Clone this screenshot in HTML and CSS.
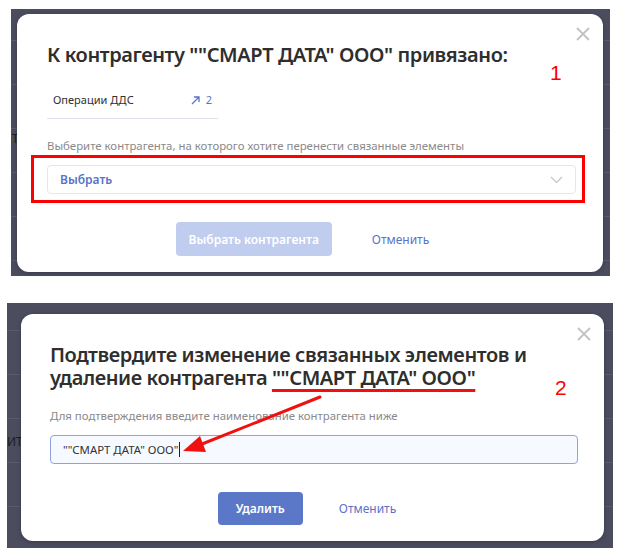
FILE: index.html
```html
<!DOCTYPE html>
<html lang="ru">

<head>
  <meta charset="UTF-8" />
  <meta name="viewport" content="width=device-width, initial-scale=1.0" />
  <title>Удаление контрагента</title>
  <link rel="stylesheet" href="styles.css">
</head>

<body>

  <!-- Шаг 1: выбор контрагента -->
  <div class="shot shot-one">
    <span class="behind behind-one">Т</span>
    <div class="modal modal-one">
      <span class="close">
        <svg width="14" height="14" viewBox="0 0 14 14"><path d="M1 1L13 13M13 1L1 13" stroke="#c2c2c2" stroke-width="1.8" /></svg>
      </span>
      <span class="step-num step-one">1</span>

      <h1 class="modal-title">К контрагенту ""СМАРТ ДАТА" ООО" привязано:</h1>

      <div class="linked-row">
        <span>Операции ДДС</span>
        <span class="linked-count">
          <svg width="9" height="9" viewBox="0 0 9 9"><path d="M1 8L8 1M3 1H8V6" fill="none" stroke="#5873c9" stroke-width="1.3" /></svg>
          2
        </span>
      </div>

      <p class="field-label">Выберите контрагента, на которого хотите перенести связанные элементы</p>

      <div class="mark-box">
        <div class="select">
          <span>Выбрать</span>
          <svg width="13" height="8" viewBox="0 0 13 8"><path d="M1 1L6.5 6.5L12 1" fill="none" stroke="#c4c4c4" stroke-width="1.2" /></svg>
        </div>
      </div>

      <div class="actions actions-one">
        <button class="btn btn-disabled">Выбрать контрагента</button>
        <a class="link-btn" href="#">Отменить</a>
      </div>
    </div>
  </div>

  <!-- Шаг 2: подтверждение удаления -->
  <div class="shot shot-two">
    <span class="behind behind-two">ИТ</span>
    <div class="modal modal-two">
      <span class="close">
        <svg width="14" height="14" viewBox="0 0 14 14"><path d="M1 1L13 13M13 1L1 13" stroke="#c2c2c2" stroke-width="1.8" /></svg>
      </span>
      <span class="step-num step-two">2</span>

      <h1 class="modal-title">Подтвердите изменение связанных элементов и удаление контрагента <span class="mark-line">""СМАРТ ДАТА" ООО"</span></h1>

      <p class="field-label">Для подтверждения введите наименование контрагента ниже</p>

      <div class="input">""СМАРТ ДАТА" ООО"<span class="caret"></span></div>

      <div class="actions actions-two">
        <button class="btn btn-primary">Удалить</button>
        <a class="link-btn" href="#">Отменить</a>
      </div>
    </div>

    <svg class="arrow" width="606" height="245" viewBox="0 0 606 245">
      <path d="M313 94L190 143" stroke="#f01010" stroke-width="3" stroke-linecap="round" />
      <path d="M176 148L193 133L199 149Z" fill="#f01010" />
    </svg>
  </div>

</body>

</html>
```

FILE: styles.css
```css
/* Общие стили */
body {
  margin: 0;
  background: #fff;
  font-family: "Noto Sans", "Open Sans", sans-serif;
  color: #303030;
  width: 618px;
  height: 557px;
  overflow: hidden;
}

/* Тёмная подложка скриншота */
.shot {
  position: relative;
  background-color: #4b4c5e;
  background-image: repeating-linear-gradient(to bottom, transparent 0, transparent 43px, #5a5b6d 43px, #5a5b6d 44px);
  box-sizing: border-box;
}

.shot-one {
  margin: 9px 0 0 11px;
  width: 599px;
  height: 267px;
  padding: 5px 7px 0 6px;
  background-position: 0 -12px;
}

.shot-two {
  margin: 27px 0 0 7px;
  width: 606px;
  height: 245px;
  padding: 11px 9px 0 14px;
  background-position: 0 -16px;
}

/* Текст страницы под окном */
.behind {
  position: absolute;
  font-size: 12px;
  line-height: 14px;
  color: #1c1c24;
}

.behind-one {
  left: 1px;
  top: 123px;
}

.behind-two {
  left: 0;
  top: 132px;
}

/* Модальное окно */
.modal {
  position: relative;
  background: #fff;
  border-radius: 12px;
  box-shadow: 0 1px 4px rgba(0, 0, 0, 0.25);
  box-sizing: border-box;
}

.modal-one {
  height: 258px;
  padding: 27px 27px 0 30px;
}

.modal-two {
  height: 227px;
  padding: 29px 20px 0 29px;
}

.close {
  position: absolute;
  right: 13px;
  top: 13px;
  line-height: 0;
}

.step-num {
  position: absolute;
  font-family: "Liberation Sans", sans-serif;
  font-size: 21px;
  color: #f00;
}

.step-one {
  left: 533px;
  top: 47px;
}

.step-two {
  left: 534px;
  top: 62px;
}

.modal-title {
  margin: 0;
  font-size: 20px;
  font-weight: 600;
  line-height: 28px;
  color: #2e2e2e;
  letter-spacing: -0.4px;
}

.modal-two .modal-title {
  line-height: 23px;
  width: 490px;
}

.mark-line {
  text-decoration: underline;
  text-decoration-color: #f01010;
  text-decoration-thickness: 3px;
  text-underline-offset: 4px;
}

/* Привязанные элементы */
.linked-row {
  display: flex;
  align-items: center;
  width: 171px;
  margin-top: 18px;
  padding: 5px 0 10px 6px;
  box-sizing: border-box;
  border-bottom: 1px solid #dfe3ea;
  font-size: 11px;
  line-height: 16px;
}

.linked-count {
  margin-left: auto;
  margin-right: 6px;
  color: #5873c9;
  display: flex;
  align-items: center;
  gap: 6px;
}

.field-label {
  margin: 19px 0 0;
  font-size: 11.4px;
  line-height: 16px;
  color: #8a8a8a;
}

/* Красная рамка-пометка */
.mark-box {
  margin: 1px 0 0 -16px;
  width: 554px;
  box-sizing: border-box;
  border: 3px solid #f00;
  padding: 7px 6px 6px 13px;
}

.select {
  height: 29px;
  box-sizing: border-box;
  border: 1px solid #e6e6e6;
  border-radius: 4px;
  display: flex;
  align-items: center;
  justify-content: space-between;
  padding: 0 12px 0 12px;
  font-size: 12px;
  font-weight: 600;
  color: #5873c9;
}

.modal-two .field-label {
  margin-top: 19px;
}

.input {
  margin-top: 11px;
  width: 528px;
  height: 29px;
  box-sizing: border-box;
  border: 1px solid #8ea3e2;
  border-radius: 4px;
  background: #f6f9ff;
  display: flex;
  align-items: center;
  padding-left: 12px;
  font-size: 11.4px;
  color: #333;
}

.caret {
  display: inline-block;
  width: 1px;
  height: 15px;
  background: #222;
  margin-left: 1px;
}

/* Кнопки */
.actions {
  display: flex;
  align-items: center;
  justify-content: center;
}

.actions-one {
  margin-top: 19px;
  gap: 40px;
  padding-right: 18px;
}

.actions-two {
  margin-top: 28px;
  gap: 36px;
  padding-right: 20px;
}

.btn {
  border: none;
  border-radius: 4px;
  font-family: inherit;
  font-size: 12px;
  font-weight: 600;
  color: #fff;
  padding: 0;
}

.btn-disabled {
  width: 156px;
  height: 34px;
  background: #c1cdef;
}

.btn-primary {
  width: 85px;
  height: 33px;
  background: #5b78c8;
}

.link-btn {
  font-size: 12px;
  color: #5873c9;
  text-decoration: none;
}

.arrow {
  position: absolute;
  left: 0;
  top: 0;
  pointer-events: none;
}
```
